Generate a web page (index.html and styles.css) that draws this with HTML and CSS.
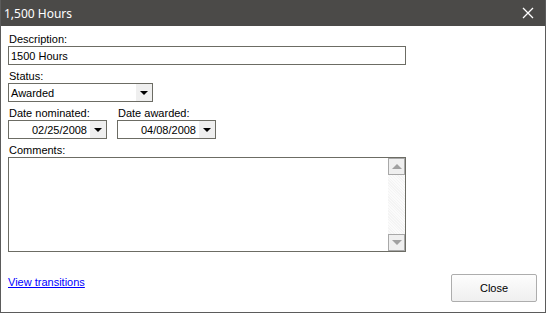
FILE: index.html
```html
<!DOCTYPE html>
<html>
<head>
<meta charset="utf-8">
<link rel="stylesheet" href="styles.css">
</head>
<body>
<div class="window">
  <div class="titlebar">
    <span class="title">1,500 Hours</span>
    <svg class="close-x" width="12" height="12" viewBox="0 0 12 12"><path d="M1 1L11 11M11 1L1 11" stroke="#fff" stroke-width="1.3"/></svg>
  </div>
  <div class="content">
    <label class="lbl">Description:</label>
    <div class="field wide"><span>1500 Hours</span></div>
    <label class="lbl">Status:</label>
    <div class="field select status"><span class="val">Awarded</span><span class="arrow"><i></i></span></div>
    <div class="dates">
      <div class="dcol">
        <label class="lbl">Date nominated:</label>
        <div class="field select date"><span class="val right">02/25/2008</span><span class="arrow"><i></i></span></div>
      </div>
      <div class="dcol">
        <label class="lbl">Date awarded:</label>
        <div class="field select date"><span class="val right">04/08/2008</span><span class="arrow"><i></i></span></div>
      </div>
    </div>
    <label class="lbl">Comments:</label>
    <div class="field textarea">
      <div class="scroll">
        <div class="sbtn"><i class="up"></i></div>
        <div class="track"></div>
        <div class="sbtn"><i class="down"></i></div>
      </div>
    </div>
    <div class="footer">
      <a class="link" href="#">View transitions</a>
      <button class="btn">Close</button>
    </div>
  </div>
</div>
</body>
</html>
```
FILE: styles.css
```css
html, body { margin: 0; padding: 0; background: #fff; }
body { font-family: "Liberation Sans", Arial, sans-serif; font-size: 11px; color: #000; }
.window {
  width: 546px; height: 313px; box-sizing: border-box;
  border: 1px solid #5b5b5b; border-top: none;
  display: flex; flex-direction: column; overflow: hidden;
}
.titlebar {
  flex: 0 0 26px; height: 26px; background: #4b4a48; margin: 0 -1px;
  display: flex; align-items: center; justify-content: space-between;
  padding: 0 12px 0 4px;
}
.title { font-family: "Noto Sans", sans-serif; font-size: 12px; color: #fff; }
.close-x { display: block; }
.content { flex: 1; display: flex; flex-direction: column; padding: 7px 0 0 7px; }
.lbl { display: block; height: 13px; line-height: 13px; margin-left: 1px; }
.field {
  box-sizing: border-box; border: 1px solid #6c6c64; background: #fff;
  height: 19px; display: flex; align-items: center; flex-shrink: 0;
}
.wide { width: 398px; margin-bottom: 5px; }
.wide span { padding-left: 2px; }
.select .val { flex: 1; padding-left: 2px; }
.select .val.right { text-align: right; padding-right: 3px; }
.arrow {
  width: 16px; height: 17px; background: #efefef;
  display: flex; align-items: center; justify-content: center;
}
.arrow i {
  width: 0; height: 0; border-left: 4px solid transparent; border-right: 4px solid transparent;
  border-top: 4px solid #000;
}
.status { width: 145px; margin-bottom: 5px; }
.dates { display: flex; gap: 10px; margin-bottom: 5px; }
.date { width: 99px; }
.textarea { width: 398px; height: 95px; align-items: stretch; justify-content: flex-end; }
.scroll {
  width: 17px; display: flex; flex-direction: column;
  background: repeating-linear-gradient(45deg, #f4f4f4 0 1px, #fbfbfb 1px 2px);
}
.sbtn {
  height: 17px; box-sizing: border-box; border: 1px solid #a8a8a8; background: #efefef;
  display: flex; align-items: center; justify-content: center;
}
.track { flex: 1; }
.sbtn i { width: 0; height: 0; border-left: 5px solid transparent; border-right: 5px solid transparent; }
.sbtn i.up { border-bottom: 5px solid #a0a0a0; }
.sbtn i.down { border-top: 5px solid #a0a0a0; }
.footer { display: flex; justify-content: space-between; align-items: flex-start; padding-top: 22px; padding-right: 8px; }
.link { color: #0000ff; text-decoration: underline; margin-top: 2px; }
.btn {
  width: 86px; height: 28px; box-sizing: border-box;
  border: 1px solid #adadad; border-radius: 2px;
  background: linear-gradient(#fdfdfd, #efefef);
  font-family: "Liberation Sans", Arial, sans-serif; font-size: 11px; color: #000;
}
```
